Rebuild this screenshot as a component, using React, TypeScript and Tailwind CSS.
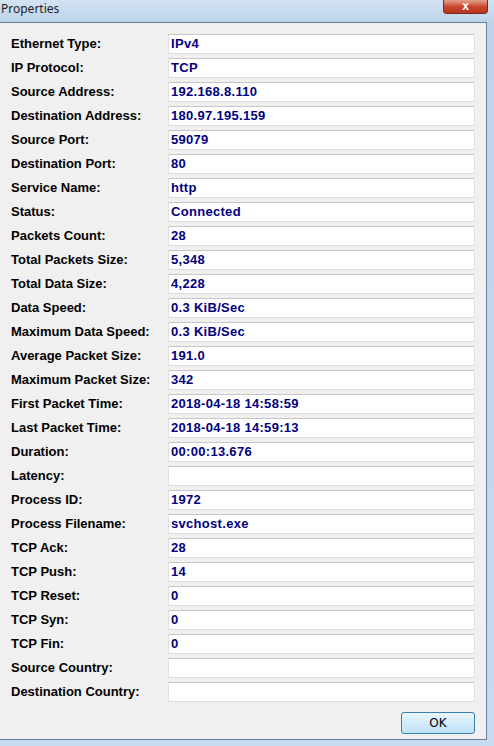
import React from "react";

const rows: [string, string][] = [
  ["Ethernet Type:", "IPv4"],
  ["IP Protocol:", "TCP"],
  ["Source Address:", "192.168.8.110"],
  ["Destination Address:", "180.97.195.159"],
  ["Source Port:", "59079"],
  ["Destination Port:", "80"],
  ["Service Name:", "http"],
  ["Status:", "Connected"],
  ["Packets Count:", "28"],
  ["Total Packets Size:", "5,348"],
  ["Total Data Size:", "4,228"],
  ["Data Speed:", "0.3 KiB/Sec"],
  ["Maximum Data Speed:", "0.3 KiB/Sec"],
  ["Average Packet Size:", "191.0"],
  ["Maximum Packet Size:", "342"],
  ["First Packet Time:", "2018-04-18 14:58:59"],
  ["Last Packet Time:", "2018-04-18 14:59:13"],
  ["Duration:", "00:00:13.676"],
  ["Latency:", ""],
  ["Process ID:", "1972"],
  ["Process Filename:", "svchost.exe"],
  ["TCP Ack:", "28"],
  ["TCP Push:", "14"],
  ["TCP Reset:", "0"],
  ["TCP Syn:", "0"],
  ["TCP Fin:", "0"],
  ["Source Country:", ""],
  ["Destination Country:", ""],
];

export default function App() {
  return (
    <div className="w-[494px] h-[746px] overflow-hidden bg-[#bfd5ea] flex flex-col font-['Liberation_Sans',Arial,sans-serif]">
      {/* title bar */}
      <div className="h-[22px] shrink-0 flex items-start justify-between bg-gradient-to-b from-[#d3e3f3] to-[#bdd3ea]">
        <div className="pl-[1px] pt-[1px] text-[12px] leading-[16px] text-[#1e1e1e] font-['Noto_Sans',sans-serif]">Properties</div>
        <div className="mr-[6px] w-[45px] h-[14px] rounded-b-[4px] border border-t-0 border-[#7a2a1e] bg-gradient-to-b from-[#e4a08b] via-[#c9482e] to-[#b7361d] flex items-center justify-center">
          <span className="text-white text-[12px] font-bold leading-none -mt-[2px]">x</span>
        </div>
      </div>
      <div className="flex h-[718px] shrink-0">
        <div className="w-[487px] h-[718px] border-t border-r border-b border-[#6b7f94] bg-[#f0f0f0] flex flex-col">
          <div className="flex flex-col gap-[4px] pt-[11px]">
            {rows.map(([label, value]) => (
              <div key={label} className="flex items-center h-[20px]">
                <div className="w-[168px] pl-[11px] text-[13px] font-bold text-black whitespace-nowrap">{label}</div>
                <div className="w-[307px] h-[20px] bg-white border border-[#dedede] border-t-[#c6c6c6] flex items-center pl-[2px] text-[13px] tracking-[0.3px] font-bold text-[#000080] whitespace-nowrap">
                  {value}
                </div>
              </div>
            ))}
          </div>
          <div className="flex justify-end pr-[11px] mt-[10px]">
            <div className="w-[74px] h-[22px] rounded-[3px] border border-[#3c7fb1] bg-gradient-to-b from-[#eaf6fd] to-[#bee2f7] flex items-center justify-center text-[12px] text-black font-['DejaVu_Sans',sans-serif]">
              OK
            </div>
          </div>
        </div>
        <div className="flex-1 bg-gradient-to-b from-[#bcd3ea] to-[#c6dbef]" />
      </div>
      <div className="flex-1 bg-[#c7dcf0]" />
    </div>
  );
}
